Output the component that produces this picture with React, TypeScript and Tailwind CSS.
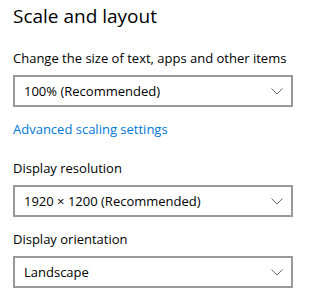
import React from "react";

const FONT = { fontFamily: '"Open Sans", "Noto Sans", sans-serif' };

function Chevron() {
  return (
    <svg width="12" height="7" viewBox="0 0 12 7" className="shrink-0">
      <path d="M0.5 0.5 L6 6 L11.5 0.5" fill="none" stroke="#6b6b6b" strokeWidth="1" />
    </svg>
  );
}

function Dropdown({ value }: { value: string }) {
  return (
    <div className="mt-[7px] flex h-[32px] w-[280px] items-center justify-between border-2 border-[#999999] bg-white pl-[9px] pr-[8px]">
      <span className="text-[13px] leading-[20px] text-black">{value}</span>
      <Chevron />
    </div>
  );
}

export default function App() {
  return (
    <div className="h-[298px] w-[333px] overflow-hidden bg-white pl-[13px] pt-[2px]" style={FONT}>
      <h1 className="text-[19px] leading-[28px] text-black">Scale and layout</h1>

      <div className="mt-[18px] text-[13px] leading-[20px] text-black">Change the size of text, apps and other items</div>
      <Dropdown value="100% (Recommended)" />

      <div className="mt-[12px] text-[13px] leading-[20px] text-[#0078d7]">Advanced scaling settings</div>

      <div className="mt-[19px] text-[13px] leading-[20px] text-black">Display resolution</div>
      <Dropdown value="1920 × 1200 (Recommended)" />

      <div className="mt-[12px] text-[13px] leading-[20px] text-black">Display orientation</div>
      <Dropdown value="Landscape" />
    </div>
  );
}
